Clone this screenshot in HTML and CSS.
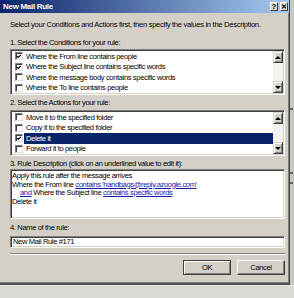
FILE: index.html
```html
<!DOCTYPE html>
<html lang="en">
<head>
  <meta charset="UTF-8" />
  <title>New Mail Rule</title>
  <link rel="stylesheet" href="styles.css">
</head>
<body>
  <div class="screen">
    <div class="dialog">
      <div class="titlebar">
        <span class="title">New Mail Rule</span>
        <span class="tbtns">
          <span class="tbtn">?</span>
          <span class="tbtn">&#x2715;</span>
        </span>
      </div>

      <div class="content">
        <p class="intro">Select your Conditions and Actions first, then specify the values in the Description.</p>

        <p class="label label-1">1. Select the Conditions for your rule:</p>
        <div class="listbox">
          <ul class="items">
            <li><span class="chk on"><svg viewBox="0 0 8 8"><path d="M1.5 3.5 L3 5.2 L6.5 1.8"/></svg></span><span class="txt">Where the From line contains people</span></li>
            <li><span class="chk on"><svg viewBox="0 0 8 8"><path d="M1.5 3.5 L3 5.2 L6.5 1.8"/></svg></span><span class="txt">Where the Subject line contains specific words</span></li>
            <li><span class="chk"></span><span class="txt">Where the message body contains specific words</span></li>
            <li><span class="chk"></span><span class="txt">Where the To line contains people</span></li>
          </ul>
          <div class="scroll">
            <span class="sbtn"><span class="arrow up"></span></span>
            <span class="track"></span>
            <span class="sbtn"><span class="arrow down"></span></span>
          </div>
        </div>

        <p class="label label-2">2. Select the Actions for your rule:</p>
        <div class="listbox">
          <ul class="items">
            <li><span class="chk"></span><span class="txt">Move it to the specified folder</span></li>
            <li><span class="chk"></span><span class="txt">Copy it to the specified folder</span></li>
            <li class="selected"><span class="chk on"><svg viewBox="0 0 8 8"><path d="M1.5 3.5 L3 5.2 L6.5 1.8"/></svg></span><span class="txt">Delete it</span></li>
            <li><span class="chk"></span><span class="txt">Forward it to people</span></li>
          </ul>
          <div class="scroll">
            <span class="sbtn"><span class="arrow up"></span></span>
            <span class="track"></span>
            <span class="sbtn"><span class="arrow down"></span></span>
          </div>
        </div>

        <p class="label label-3">3. Rule Description (click on an underlined value to edit it):</p>
        <div class="desc">
          <p>Apply this rule after the message arrives</p>
          <p>Where the From line <a href="#">contains 'handbags@reply.azoogle.com'</a></p>
          <p class="indent"><a href="#">and</a> Where the Subject line <a href="#">contains specific words</a></p>
          <p>Delete it</p>
        </div>

        <p class="label label-4">4. Name of the rule:</p>
        <div class="field">New Mail Rule #171</div>

        <div class="separator"></div>

        <div class="actions">
          <span class="btn">OK</span>
          <span class="btn">Cancel</span>
        </div>
      </div>
    </div>
    <div class="behind">
      <span class="mark m1"></span>
      <span class="mark m2"></span>
      <span class="mark m3"></span>
    </div>
  </div>
  <div class="below"></div>
</body>
</html>
```

FILE: styles.css
```css
* { box-sizing: border-box; margin: 0; padding: 0; }
html, body {
  width: 294px;
  height: 298px;
  overflow: hidden;
  background: #dcdad4;
  font-family: 'Liberation Sans', Arial, sans-serif;
  font-size: 7.6px;
  letter-spacing: -0.38px;
  color: #000;
}
.screen {
  display: flex;
  height: 285px;
}
.dialog {
  width: 290px;
  height: 285px;
  background: #d4d0c8;
  border-right: 1px solid #404040;
  border-bottom: 2px solid #505050;
  box-shadow: inset -1px -1px 0 #808080;
  display: flex;
  flex-direction: column;
}
.behind {
  flex: 1;
  background: #c8c6c0;
  display: flex;
  flex-direction: column;
}
.behind .mark {
  display: block;
  height: 2px;
  width: 3px;
  background: #606060;
}
.m1 { margin-top: 108px; }
.m2 { margin-top: 62px; }
.m3 { margin-top: 8px; }
.below {
  height: 13px;
  background: #dcdad4;
  border-top: 1px solid #eeece8;
}

/* title bar */
.titlebar {
  height: 13px;
  background: linear-gradient(90deg, #0a246a, #a6caf0);
  display: flex;
  align-items: center;
  justify-content: space-between;
  padding: 0 1px 0 3px;
}
.title {
  color: #fff;
  font-weight: bold;
  font-size: 8px;
  letter-spacing: -0.3px;
}
.tbtns { display: flex; gap: 2px; }
.tbtn {
  width: 8px;
  height: 9px;
  background: #d4d0c8;
  border: 1px solid;
  border-color: #fff #404040 #404040 #fff;
  font-weight: bold;
  font-size: 7px;
  letter-spacing: 0;
  line-height: 7px;
  display: flex;
  align-items: center;
  justify-content: center;
}

/* body */
.content {
  flex: 1;
  padding: 0 4px 0 10px;
  display: flex;
  flex-direction: column;
}
.intro { margin-top: 7px; line-height: 10px; white-space: nowrap; letter-spacing: -0.3px; }
.label { line-height: 10px; white-space: nowrap; }
.label-1 { margin-top: 8px; }
.label-2 { margin-top: 3px; }
.label-3 { margin-top: 3px; }
.label-4 { margin-top: 4px; }

.listbox {
  margin-top: 1px;
  height: 46px;
  display: flex;
  background: #fff;
  border: 1px solid;
  border-color: #808080 #fff #fff #808080;
  box-shadow: inset 1px 1px 0 #404040, inset -1px -1px 0 #d4d0c8;
  padding: 1px;
}
.label-2 + .listbox { margin-top: 2px; }
.items {
  list-style: none;
  flex: 1;
  padding-left: 3px;
}
.items li {
  height: 10.5px;
  display: flex;
  align-items: center;
  white-space: nowrap;
}
.chk {
  width: 8px;
  height: 8px;
  background: #fff;
  border: 1px solid;
  border-color: #808080 #e0e0e0 #e0e0e0 #808080;
  box-shadow: inset 1px 1px 0 #404040;
  margin-right: 1px;
  display: flex;
}
.chk svg {
  width: 7px;
  height: 7px;
  fill: none;
  stroke: #000;
  stroke-width: 1.6;
}
.txt {
  padding: 0 2px;
  height: 100%;
  display: flex;
  align-items: center;
  flex: 1;
}
.selected .txt {
  background: #0a246a;
  color: #fff;
}

.scroll {
  width: 10px;
  display: flex;
  flex-direction: column;
  background: #f4f3f0;
}
.sbtn {
  height: 12px;
  background: #d4d0c8;
  border: 1px solid;
  border-color: #d4d0c8 #404040 #404040 #d4d0c8;
  box-shadow: inset 1px 1px 0 #fff, inset -1px -1px 0 #808080;
  display: flex;
  align-items: center;
  justify-content: center;
}
.track { flex: 1; }
.arrow {
  width: 0;
  height: 0;
  border-left: 3px solid transparent;
  border-right: 3px solid transparent;
}
.arrow.up { border-bottom: 3px solid #000; }
.arrow.down { border-top: 3px solid #000; }

.desc {
  height: 50px;
  background: #fff;
  border: 1px solid;
  border-color: #808080 #fff #fff #808080;
  box-shadow: inset 1px 1px 0 #404040, inset -1px -1px 0 #d4d0c8;
  padding: 2px 1px;
}
.desc p {
  line-height: 8.5px;
  white-space: nowrap;
}
.desc .indent { padding-left: 8px; }
.desc a { color: #1a1aa8; }

.field {
  margin-top: 3px;
  height: 12px;
  background: #fff;
  border: 1px solid;
  border-color: #808080 #fff #fff #808080;
  box-shadow: inset 1px 1px 0 #404040, inset -1px -1px 0 #d4d0c8;
  padding: 0 2px;
  line-height: 10px;
}

.separator {
  margin-top: 5px;
  height: 2px;
  border-top: 1px solid #808080;
  border-bottom: 1px solid #fff;
}

.actions {
  margin-top: 5px;
  display: flex;
  justify-content: flex-end;
  gap: 6px;
}
.btn {
  width: 48px;
  height: 15px;
  background: #d4d0c8;
  border: 1px solid;
  border-color: #fff #404040 #404040 #fff;
  box-shadow: inset -1px -1px 0 #808080;
  display: flex;
  align-items: center;
  justify-content: center;
}
.btn:first-child { border-color: #404040; box-shadow: inset 1px 1px 0 #fff, inset -1px -1px 0 #808080; }
```
